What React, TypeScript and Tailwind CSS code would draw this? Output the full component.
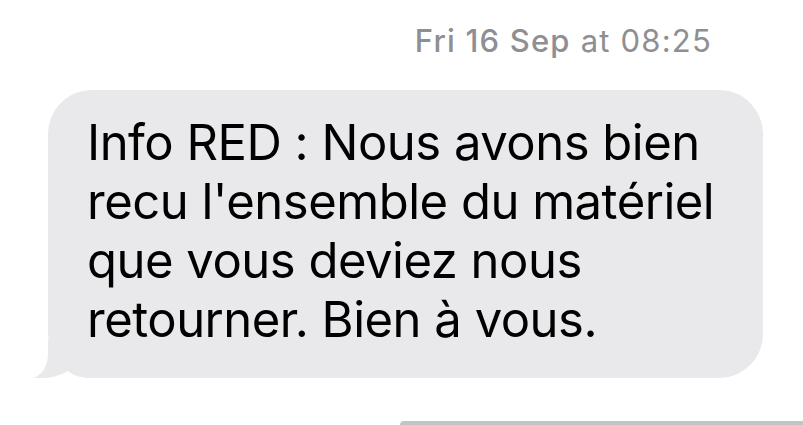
import React from "react";

export default function App() {
  return (
    <div
      className="w-[803px] h-[425px] overflow-hidden bg-white flex flex-col"
      style={{ fontFamily: "Inter, 'Liberation Sans', sans-serif" }}
    >
      <div className="h-[90px] flex justify-end items-start pt-[22px] pr-[91px] text-[31px] leading-[38px] text-[#8e8e93] tracking-[1.2px]">
        <span className="font-medium">Fri 16 Sep</span>
        <span className="ml-[10px]">at 08:25</span>
      </div>
      <div className="relative ml-[48px] w-[715px] h-[288px]">
        <svg
          className="absolute left-[-15px] bottom-0"
          width="60"
          height="38"
          viewBox="0 0 60 38"
        >
          <path
            d="M15 0 L15 13 C15 27 9 35 0 38 C15 39 27 36 35 31 C41 36 49 38 59 38 L59 0 Z"
            fill="#e9e9eb"
          />
        </svg>
        <div className="relative w-full h-full rounded-[44px] bg-[#e9e9eb] pl-[39px] pr-[20px] pt-[23px] text-[49px] leading-[59px] text-black tracking-[-0.5px]">
          Info RED : Nous avons bien
          <br />
          recu l'ensemble du matériel
          <br />
          que vous deviez nous
          <br />
          retourner. Bien à vous.
        </div>
      </div>
      <div className="flex-1 flex justify-end items-end">
        <div className="w-[403px] h-[4px] bg-[#c4c4c4] rounded-tl-[40px]" />
      </div>
    </div>
  );
}
